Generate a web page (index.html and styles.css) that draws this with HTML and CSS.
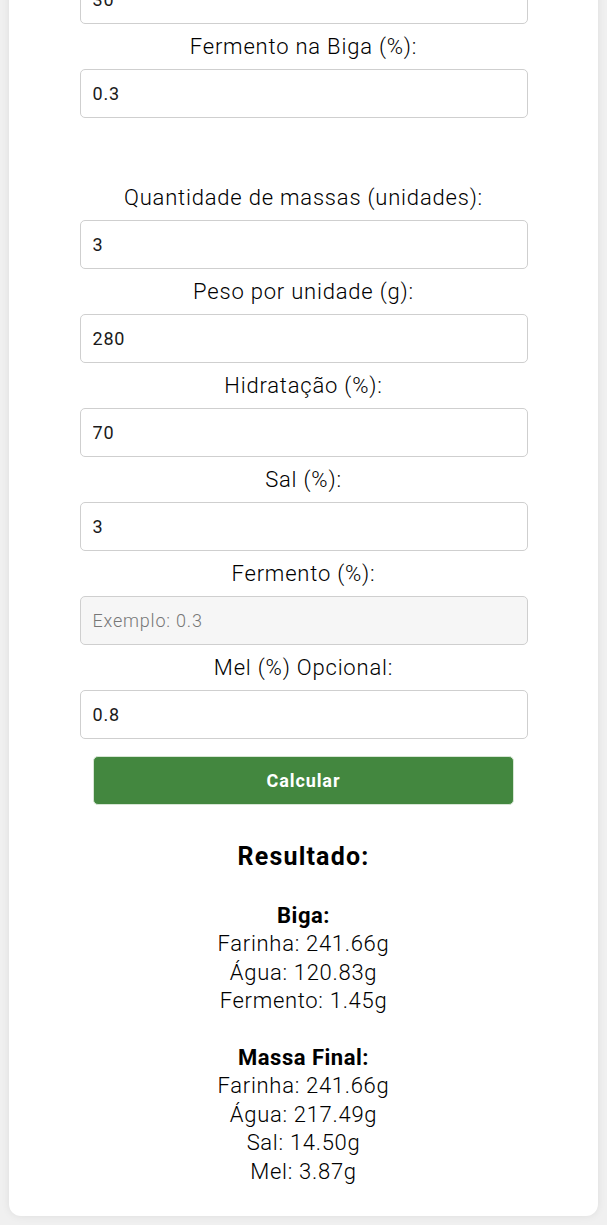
FILE: index.html
```html
<!DOCTYPE html>
<html lang="pt-BR">
<head>
<meta charset="utf-8">
<title>Calculadora de Biga</title>
<link rel="stylesheet" href="styles.css">
</head>
<body>
<div class="card">
  <div class="group">
    <input class="field" type="text" value="30">
    <label class="label">Fermento na Biga (%):</label>
    <input class="field" type="text" value="0.3">
  </div>
  <div class="group group-gap">
    <label class="label">Quantidade de massas (unidades):</label>
    <input class="field" type="text" value="3">
    <label class="label">Peso por unidade (g):</label>
    <input class="field" type="text" value="280">
    <label class="label">Hidratação (%):</label>
    <input class="field" type="text" value="70">
    <label class="label">Sal (%):</label>
    <input class="field" type="text" value="3">
    <label class="label">Fermento (%):</label>
    <input class="field field-muted" type="text" placeholder="Exemplo: 0.3">
    <label class="label">Mel (%) Opcional:</label>
    <input class="field" type="text" value="0.8">
  </div>
  <button class="btn" type="button">Calcular</button>
  <h2 class="result-title">Resultado:</h2>
  <p class="result">
    <strong>Biga:</strong><br>
    Farinha: 241.66g<br>
    Água: 120.83g<br>
    Fermento: 1.45g<br>
    <br>
    <strong>Massa Final:</strong><br>
    Farinha: 241.66g<br>
    Água: 217.49g<br>
    Sal: 14.50g<br>
    Mel: 3.87g
  </p>
</div>
</body>
</html>
```
FILE: styles.css
```css
html, body {
  margin: 0;
  padding: 0;
}
body {
  background: #f0f0f0;
  font-family: Roboto, "Liberation Sans", Arial, sans-serif;
  color: #000;
  padding: 0 9px 9px;
}
.card {
  background: #fff;
  border-radius: 12px;
  box-shadow: 0 0 8px rgba(0, 0, 0, 0.08);
  margin-top: -45px;
  padding: 20px 0 30px;
  text-align: center;
}
.group {
  display: flex;
  flex-direction: column;
  align-items: center;
}
.group-gap {
  margin-top: 57px;
}
.label {
  display: block;
  font-size: 22px;
  font-weight: 300;
  letter-spacing: 0.8px;
  line-height: 26px;
  margin: 10px 0 9px;
  color: #000;
}
.field {
  display: block;
  box-sizing: border-box;
  width: 448px;
  height: 49px;
  margin: 0 auto;
  border: 1px solid #cfcfcf;
  border-radius: 5px;
  padding: 0 12px;
  font-family: Roboto, "Liberation Sans", Arial, sans-serif;
  font-size: 18px;
  letter-spacing: 0.8px;
  color: #1a1a1a;
  background: #fff;
  outline: none;
}
.field-muted {
  background: #f6f6f6;
}
.field::placeholder {
  color: #777;
  font-weight: 300;
}
.btn {
  display: block;
  box-sizing: border-box;
  width: 421px;
  height: 49px;
  margin: 17px auto 0;
  border: 1px solid #d6e6d4;
  border-radius: 5px;
  background: #43873f;
  color: #fff;
  font-family: Roboto, "Liberation Sans", Arial, sans-serif;
  font-size: 18px;
  font-weight: 700;
  letter-spacing: 0.9px;
}
.result-title {
  font-size: 25px;
  line-height: 30px;
  font-weight: 700;
  letter-spacing: 1.2px;
  margin: 37px 0 0;
  color: #000;
}
.result {
  font-size: 22px;
  font-weight: 300;
  letter-spacing: 0.7px;
  line-height: 28.4px;
  margin: 30px 0 0;
  color: #000;
}
.result strong {
  font-weight: 700;
  letter-spacing: 0.5px;
}
```
